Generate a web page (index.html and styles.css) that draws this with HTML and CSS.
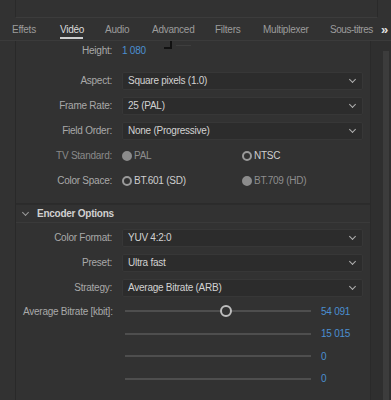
FILE: index.html
```html
<!DOCTYPE html>
<html lang="en">
<head>
  <meta charset="UTF-8" />
  <title>Export Settings</title>
  <link rel="stylesheet" href="styles.css">
</head>
<body>
  <div class="top-strip"></div>

  <div class="tabs">
    <span class="tab">Effets</span>
    <span class="tab active">Vidéo</span>
    <span class="tab">Audio</span>
    <span class="tab">Advanced</span>
    <span class="tab">Filters</span>
    <span class="tab">Multiplexer</span>
    <span class="tab">Sous-titres</span>
    <span class="more">»</span>
  </div>

  <div class="main">
    <div class="content">
      <div class="section video">
        <div class="row height-row">
          <div class="label">Height:</div>
          <div class="value">1 080</div>
          <span class="corner"></span>
          <span class="dash"></span>
        </div>
        <div class="row first">
          <div class="label">Aspect:</div>
          <div class="select">Square pixels (1.0)<span class="caret"></span></div>
        </div>
        <div class="row">
          <div class="label">Frame Rate:</div>
          <div class="select">25 (PAL)<span class="caret"></span></div>
        </div>
        <div class="row">
          <div class="label">Field Order:</div>
          <div class="select">None (Progressive)<span class="caret"></span></div>
        </div>
        <div class="row">
          <div class="label dim">TV Standard:</div>
          <div class="radios">
            <span class="radio filled dim-text">PAL</span>
            <span class="radio">NTSC</span>
          </div>
        </div>
        <div class="row">
          <div class="label">Color Space:</div>
          <div class="radios">
            <span class="radio">BT.601 (SD)</span>
            <span class="radio filled dim-text">BT.709 (HD)</span>
          </div>
        </div>
      </div>

      <div class="section encoder">
        <div class="section-head">
          <span class="chevron"></span>
          <span>Encoder Options</span>
        </div>
        <div class="row lead">
          <div class="label">Color Format:</div>
          <div class="select">YUV 4:2:0<span class="caret"></span></div>
        </div>
        <div class="row">
          <div class="label">Preset:</div>
          <div class="select">Ultra fast<span class="caret"></span></div>
        </div>
        <div class="row">
          <div class="label">Strategy:</div>
          <div class="select">Average Bitrate (ARB)<span class="caret"></span></div>
        </div>

        <div class="slider-row">
          <div class="slider-label">Average Bitrate [kbit]:</div>
          <div class="track"><span class="thumb"></span></div>
          <div class="num">54 091</div>
        </div>
        <div class="slider-row">
          <div class="slider-label"></div>
          <div class="track"></div>
          <div class="num">15 015</div>
        </div>
        <div class="slider-row">
          <div class="slider-label"></div>
          <div class="track"></div>
          <div class="num">0</div>
        </div>
        <div class="slider-row">
          <div class="slider-label"></div>
          <div class="track"></div>
          <div class="num">0</div>
        </div>
      </div>
    </div>
    <div class="scrollbar"><div class="thumb-bar"></div></div>
  </div>
</body>
</html>
```

FILE: styles.css
```css
body {
  margin: 0;
  background-color: #323232;
  color: #a9a9a9;
  font-family: "Liberation Sans", Arial, sans-serif;
  font-size: 10px;
  letter-spacing: -0.25px;
  width: 391px;
  height: 400px;
  overflow: hidden;
}

.top-strip {
  height: 17px;
  margin-left: 15px;
  margin-right: 13px;
  border-left: 1px solid #2a2a2a;
  border-right: 1px solid #2a2a2a;
  border-bottom: 1px solid #3c3c3c;
}

.tabs {
  display: flex;
  align-items: center;
  height: 22px;
  padding-left: 12px;
  border-bottom: 1px solid #3b3b3b;
  color: #9c9c9c;
}

.tab {
  position: relative;
  white-space: nowrap;
}

.tab:nth-child(1) { width: 48px; }
.tab:nth-child(2) { width: 45px; }
.tab:nth-child(3) { width: 47px; }
.tab:nth-child(4) { width: 63px; }
.tab:nth-child(5) { width: 48px; }
.tab:nth-child(6) { width: 67px; }
.tab:nth-child(7) { width: 51px; letter-spacing: -0.45px; }

.tab.active {
  color: #dcdcdc;
}

.tab.active::after {
  content: "";
  position: absolute;
  left: 0;
  width: 23px;
  bottom: -4px;
  height: 2px;
  background: #cfcfcf;
}

.more {
  color: #e0e0e0;
  font-weight: bold;
  font-size: 13px;
}

.main {
  display: flex;
  height: 359px;
}

.content {
  width: 354px;
  margin-left: 15px;
  border-left: 1px solid #292929;
  border-right: 1px solid #2a2a2a;
}

.scrollbar {
  flex: 1;
  position: relative;
  background: #2f2f2f;
}

.thumb-bar {
  position: absolute;
  left: 12px;
  width: 6px;
  top: 10px;
  bottom: 0;
  background: #3c3c3c;
}

.section.video {
  height: 162px;
  border-bottom: 1px solid #2b2b2b;
}

.row {
  display: flex;
  align-items: center;
  height: 25px;
}

.row.height-row {
  height: 18px;
  position: relative;
}

.row.first {
  margin-top: 9px;
}

.row.lead {
  margin-top: 2px;
}

.label {
  width: 96px;
  padding-right: 10px;
  text-align: right;
  white-space: nowrap;
}

.label.dim {
  color: #8a8a8a;
}

.value {
  color: #4b8fd0;
}

.corner {
  position: absolute;
  left: 148px;
  top: 0;
  width: 6px;
  height: 6px;
  border-right: 2px solid #111;
  border-bottom: 2px solid #111;
}

.dash {
  position: absolute;
  left: 160px;
  top: 4px;
  width: 15px;
  height: 1px;
  background: #3e3e3e;
}

.select {
  position: relative;
  width: 234px;
  height: 16px;
  line-height: 16px;
  padding-left: 5px;
  background: #2c2c2c;
  border: 1px solid #373737;
  border-radius: 2px;
  color: #d2d2d2;
  white-space: nowrap;
}

.caret {
  position: absolute;
  right: 7px;
  top: 4px;
  width: 4px;
  height: 4px;
  border-right: 1px solid #b0b0b0;
  border-bottom: 1px solid #b0b0b0;
  transform: rotate(45deg);
}

.radios {
  display: flex;
}

.radio {
  display: flex;
  align-items: center;
  width: 120px;
  color: #cfcfcf;
}

.radio::before {
  content: "";
  width: 6px;
  height: 6px;
  margin-right: 2px;
  border: 2px solid #9a9a9a;
  border-radius: 50%;
}

.radio.filled::before {
  background: #8c8c8c;
  border-color: #8c8c8c;
}

.radio.dim-text {
  color: #8e8e8e;
}

.section.encoder {
  border-top: 1px solid #2c2c2c;
}

.section-head {
  display: flex;
  align-items: center;
  height: 17px;
  padding-left: 5px;
  color: #d0d0d0;
  font-weight: bold;
  border-bottom: 1px solid #3a3a3a;
}

.chevron {
  width: 4px;
  height: 4px;
  margin: -3px 9px 0 2px;
  border-right: 1px solid #9a9a9a;
  border-bottom: 1px solid #9a9a9a;
  transform: rotate(45deg);
}

.slider-row {
  display: flex;
  align-items: center;
  height: 22.5px;
}

.slider-label {
  width: 102px;
  padding-left: 7px;
  white-space: nowrap;
}

.track {
  position: relative;
  width: 186px;
  height: 2px;
  background: #4e4e4e;
}

.thumb {
  position: absolute;
  left: 95px;
  top: -5px;
  width: 8px;
  height: 8px;
  border: 2px solid #bdbdbd;
  border-radius: 50%;
  background: #323232;
}

.num {
  margin-left: 10px;
  color: #4b8fd0;
}
```
